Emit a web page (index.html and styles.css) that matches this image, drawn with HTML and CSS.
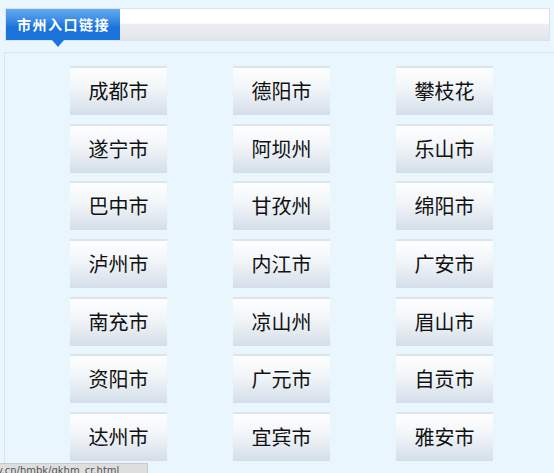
FILE: index.html
```html
<!DOCTYPE html>
<html lang="zh-CN">
<head>
<meta charset="utf-8">
<title>市州入口链接</title>
<link rel="stylesheet" href="styles.css">
</head>
<body>
<div class="header">
  <div class="tab">市州入口链接</div>
  <div class="bar"></div>
</div>
<div class="panel">
  <div class="grid">
    <a class="city" href="#">成都市</a>
    <a class="city" href="#">德阳市</a>
    <a class="city" href="#">攀枝花</a>
    <a class="city" href="#">遂宁市</a>
    <a class="city" href="#">阿坝州</a>
    <a class="city" href="#">乐山市</a>
    <a class="city" href="#">巴中市</a>
    <a class="city" href="#">甘孜州</a>
    <a class="city" href="#">绵阳市</a>
    <a class="city" href="#">泸州市</a>
    <a class="city" href="#">内江市</a>
    <a class="city" href="#">广安市</a>
    <a class="city" href="#">南充市</a>
    <a class="city" href="#">凉山州</a>
    <a class="city" href="#">眉山市</a>
    <a class="city" href="#">资阳市</a>
    <a class="city" href="#">广元市</a>
    <a class="city" href="#">自贡市</a>
    <a class="city" href="#">达州市</a>
    <a class="city" href="#">宜宾市</a>
    <a class="city" href="#">雅安市</a>
  </div>
</div>
<div class="status">y.cn/hmbk/qkhm_cr.html</div>
</body>
</html>
```
FILE: styles.css
```css
html, body {
  margin: 0;
  padding: 0;
  background: #eaf6fd;
  height: 100%;
  overflow: hidden;
}
body {
  font-family: "Noto Sans CJK SC", "Noto Sans", sans-serif;
}
.header {
  display: flex;
  margin: 8px 0 0 5px;
  width: 545px;
  height: 33px;
  box-sizing: border-box;
  border: 1px solid #d6e4ef;
  position: relative;
}
.tab {
  position: relative;
  width: 114px;
  flex: none;
  background: linear-gradient(#62a9ee 0%, #3d8de6 35%, #1b72da 60%, #1a74dc 100%);
  color: #fff;
  font-size: 14px;
  font-weight: bold;
  letter-spacing: 1.5px;
  line-height: 31px;
  text-align: center;
  text-indent: 1px;
}
.tab::after {
  content: "";
  position: absolute;
  left: 46px;
  top: 31px;
  border-left: 6px solid transparent;
  border-right: 6px solid transparent;
  border-top: 7px solid #1a74dc;
}
.bar {
  flex: 1;
  background: linear-gradient(#ffffff 0%, #ffffff 45%, #eceef3 50%, #e2e5ec 100%);
}
.panel {
  margin: 11px 0 0 4px;
  border-top: 1px solid #d8e6f0;
  border-left: 1px solid #d8e6f0;
  padding: 13px 0 20px 65px;
}
.grid {
  display: grid;
  grid-template-columns: repeat(3, 97px);
  column-gap: 66px;
  row-gap: 8.67px;
}
.city {
  display: block;
  height: 49px;
  box-sizing: border-box;
  border-top: 2px solid #dfe4ea;
  background: linear-gradient(#fdfeff 0%, #f3f6f9 40%, #d4dee9 100%);
  color: #111;
  text-decoration: none;
  font-size: 20px;
  line-height: 46px;
  text-align: center;
}
.status {
  position: fixed;
  left: 0;
  top: 463px;
  width: 147px;
  height: 14px;
  background: #dedede;
  border-top: 1px solid #c9c9c9;
  border-right: 1px solid #c9c9c9;
  color: #555;
  font-family: "DejaVu Sans", sans-serif;
  font-size: 10px;
  line-height: 13px;
  padding-left: 0;
  white-space: nowrap;
  overflow: hidden;
  text-indent: -3px;
}
```
